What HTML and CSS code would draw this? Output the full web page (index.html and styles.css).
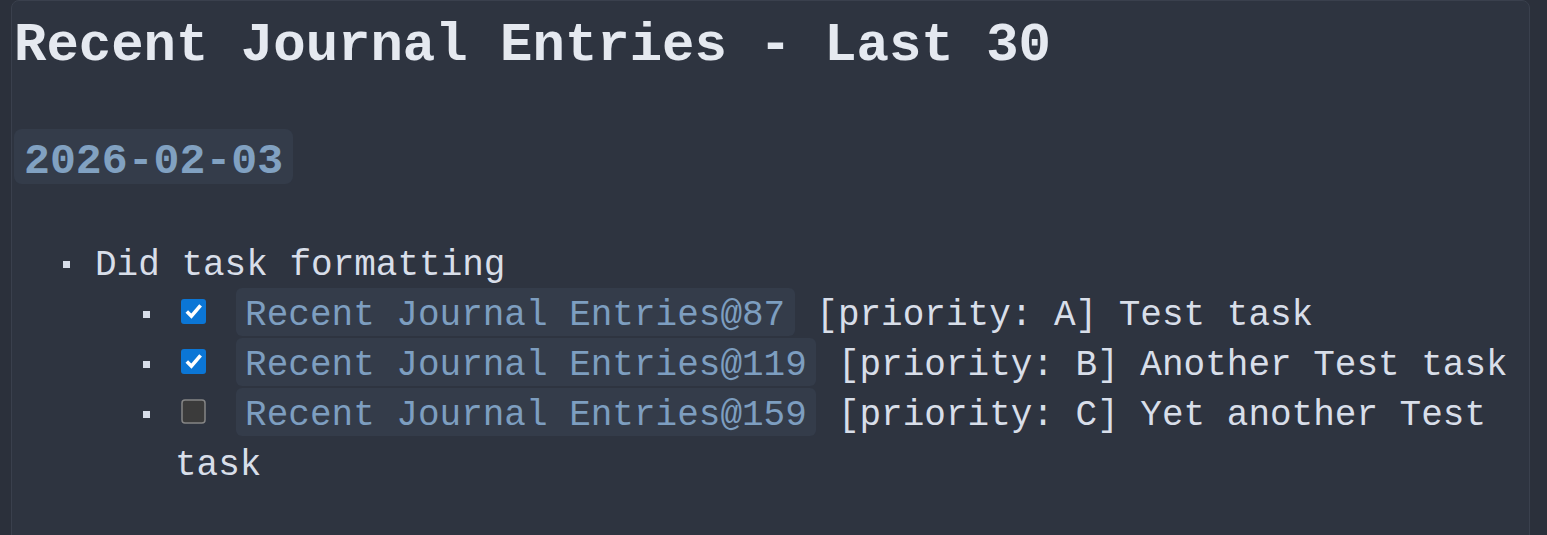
FILE: index.html
```html
<!DOCTYPE html>
<html lang="en">
<head>
    <meta charset="UTF-8">
    <meta name="viewport" content="width=device-width, initial-scale=1.0">
    <title>Recent Journal Entries</title>
    <link rel="stylesheet" href="styles.css">
</head>
<body>
    <div class="journal">
        <h1 class="journal-title">Recent Journal Entries - Last 30</h1>
        <h2 class="entry-date"><span>2026-02-03</span></h2>
        <ul class="entries">
            <li>Did task formatting
                <ul>
                    <li><svg class="task-box" width="25" height="25" viewBox="0 0 25 25"><rect class="box-on" x="0" y="0" width="25" height="25" rx="3"/><path class="tick" d="M5.8 12.6 L10.4 17.2 L19.6 6.4"/></svg> <a class="wikilink" href="#">Recent Journal Entries@87</a> [priority: A] Test task</li>
                    <li><svg class="task-box" width="25" height="25" viewBox="0 0 25 25"><rect class="box-on" x="0" y="0" width="25" height="25" rx="3"/><path class="tick" d="M5.8 12.6 L10.4 17.2 L19.6 6.4"/></svg> <a class="wikilink" href="#">Recent Journal Entries@119</a> [priority: B] Another Test task</li>
                    <li><svg class="task-box" width="25" height="25" viewBox="0 0 25 25"><rect class="box-off" x="1" y="1" width="23" height="23" rx="3"/></svg> <a class="wikilink" href="#">Recent Journal Entries@159</a> [priority: C] Yet another Test task</li>
                </ul>
            </li>
        </ul>
    </div>
</body>
</html>
```

FILE: styles.css
```css
body { margin: 0; background-color: #2b303b; font-family: "Liberation Mono", "DejaVu Sans Mono", monospace; color: #d8dee9; }
.journal {
    margin: 0 17px 0 11px;
    padding: 0 2px;
    min-height: 600px;
    background-color: #2e3440;
    border: 1px solid #3a404d;
    border-radius: 8px;
}
.journal-title { margin: 12px 0 0; font-size: 54px; line-height: 65px; font-weight: bold; color: #e5e9f0; }
.entry-date { display: flex; margin: 51px 0 0; font-size: 43.2px; font-weight: bold; }
.entry-date span {
    padding: 11px 10px 0;
    line-height: 44px;
    color: #81a1c1;
    background-color: #343c4a;
    border-radius: 8px;
}
.entries, .entries ul { list-style: none; margin: 0; }
.entries { margin-top: 57.4px; padding-left: 81px; }
.entries ul { padding-left: 80px; }
.entries li { position: relative; font-size: 36px; line-height: 50px; }
.entries li::before {
    content: "";
    position: absolute;
    left: -32px;
    top: 20px;
    width: 7px;
    height: 7px;
    background-color: #d8dee9;
}
.task-box { margin: 0 8px 1px 6px; }
.box-on { fill: #0b76d6; }
.box-off { fill: #3b3b3b; stroke: #858585; stroke-width: 1.5; }
.tick { fill: none; stroke: #fff; stroke-width: 3.6; }
.wikilink {
    padding: 7px 9.5px 0;
    color: #7d9ec0;
    background-color: #343c4a;
    border-radius: 6px;
    text-decoration: none;
}
```
